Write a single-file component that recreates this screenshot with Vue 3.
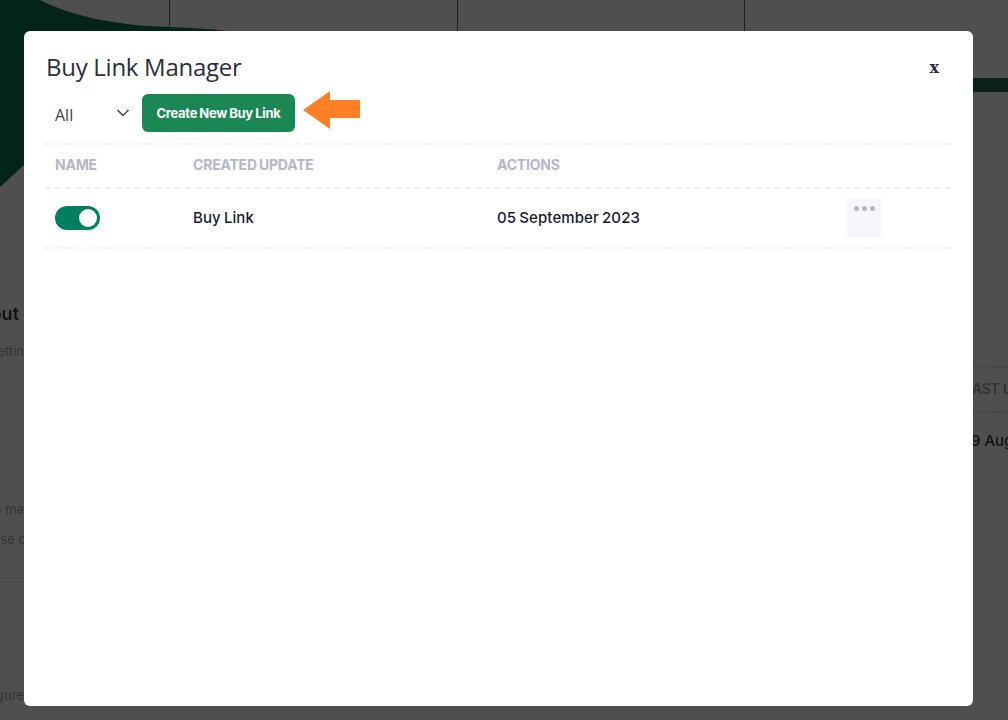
<script setup>
const row = { name: 'Buy Link', date: '05 September 2023' }
</script>

<template>
  <div class="page">
    <svg class="hero" width="300" height="200" viewBox="0 0 300 200" aria-hidden="true">
      <path d="M0 0H40C75 18 125 26 170 27C195 28 215 29 240 33L24 165L0 187Z" fill="#03241b" />
    </svg>
    <div class="top-cells">
      <div class="cell c1"></div>
      <div class="cell c2"></div>
      <div class="cell c3"></div>
    </div>
    <div class="side-bar"></div>

    <div class="under-left">
      <div class="ul-title">About</div>
      <div class="ul-sub">Settin</div>
      <div class="ul-line"></div>
      <div class="ul-t1">to ma</div>
      <div class="ul-t2">ase c</div>
      <div class="ul-line second"></div>
      <div class="ul-t3">Configure</div>
    </div>
    <div class="under-right">
      <div class="ur-line"></div>
      <div class="ur-head">AST U</div>
      <div class="ur-line"></div>
      <div class="ur-val">9 Aug</div>
      <div class="ur-line"></div>
    </div>

    <div class="modal">
      <header class="modal-head">
        <h1>Buy Link Manager</h1>
        <span class="close">x</span>
      </header>
      <div class="tools">
        <div class="select">
          <span>All</span>
          <svg width="14" height="8" viewBox="0 0 14 8"><path d="M1.5 1L7 6.5L12.5 1" fill="none" stroke="#444" stroke-width="1.5" /></svg>
        </div>
        <button class="create">Create New Buy Link</button>
        <svg class="arrow" width="58" height="38" viewBox="0 0 58 38"><path d="M1 19L28 0V9H58V27H28V38Z" fill="#ff7f27" /></svg>
      </div>
      <div class="grid head">
        <div>NAME</div>
        <div>CREATED UPDATE</div>
        <div>ACTIONS</div>
        <div></div>
      </div>
      <div class="grid body">
        <div><span class="toggle"><i></i></span></div>
        <div class="txt">{{ row.name }}</div>
        <div class="txt">{{ row.date }}</div>
        <div>
          <span class="more"><b></b><b></b><b></b></span>
        </div>
      </div>
    </div>
  </div>
</template>

<style>
html, body { margin: 0; background: #4f4f4f; }
</style>

<style scoped>
.page {
  position: relative;
  width: 1008px;
  height: 720px;
  overflow: hidden;
  background: #4f4f4f;
  font-family: Inter, "Liberation Sans", sans-serif;
}
.hero { position: absolute; left: 0; top: 0; }
.top-cells { position: absolute; top: 0; left: 169px; display: flex; height: 40px; }
.cell { border-left: 1px solid #10261f; }
.c1 { width: 287px; }
.c2 { width: 286px; }
.side-bar { position: absolute; right: 0; top: 78px; width: 40px; height: 14px; background: #0c1f1a; }
.under-left { position: absolute; left: 0; top: 300px; width: 24px; height: 420px; overflow: hidden; color: #2c2c2c; filter: blur(0.4px); }
.under-left > div { display: flex; justify-content: flex-end; white-space: nowrap; }
.ul-title { font-size: 18px; font-weight: 600; color: #111; margin-top: 3px; height: 24px; margin-right: 5px; }
.ul-sub { font-size: 13px; margin-top: 16px; height: 18px; color: #333; }
.ul-line { height: 1px; background: #484848; margin-top: 47px; }
.ul-line.second { margin-top: 32px; }
.ul-t1 { font-size: 13px; margin-top: 92px; height: 18px; color: #333; }
.ul-t2 { font-size: 13px; margin-top: 12px; height: 18px; color: #333; margin-right: -2px; }
.ul-t3 { font-size: 13px; margin-top: 105px; height: 18px; color: #333; }
.under-right { position: absolute; right: 0; top: 366px; width: 35px; overflow: hidden; filter: blur(0.4px); }
.under-right > div { white-space: nowrap; }
.ur-line { border-top: 2px dashed #474747; }
.ur-head { font-size: 14px; font-weight: 600; color: #333; padding: 12px 0 14px 0; margin-left: -1px; letter-spacing: -0.3px; }
.ur-val { font-size: 15px; font-weight: 500; color: #111; padding: 18px 0 21px 0; margin-left: -2px; }

.modal {
  position: absolute;
  left: 24px;
  top: 31px;
  width: 949px;
  height: 675px;
  box-sizing: border-box;
  padding: 0 22px 0 21px;
  background: #fff;
  border-radius: 6px;
}
.modal-head { display: flex; justify-content: space-between; align-items: center; height: 63px; padding-left: 1px; }
h1 {
  margin: 8px 0 0;
  font-family: "Open Sans", sans-serif;
  font-weight: 400;
  font-size: 24px;
  letter-spacing: -0.28px;
  color: #2a2f3a;
}
.close { font-family: "DejaVu Serif", serif; font-weight: 700; font-size: 16px; color: #2b2b3a; margin: 10px 12px 0 0; line-height: 1; }
.tools { display: flex; align-items: center; height: 38px; }
.select {
  width: 97px;
  box-sizing: border-box;
  padding: 4px 18px 0 10px;
  display: flex;
  justify-content: space-between;
  align-items: center;
  font-family: "Open Sans", sans-serif;
  font-size: 16px;
  color: #444;
}
.select svg { margin-top: -5px; margin-right: -6px; }
.create {
  width: 153px;
  height: 38px;
  border: 0;
  border-radius: 6px;
  background: #1a8754;
  color: #fff;
  font-family: Inter, sans-serif;
  font-size: 13px;
  font-weight: 700;
  letter-spacing: -0.3px;
  word-spacing: -0.5px;
  padding: 0;
  margin-right: 7px;
}
.arrow { margin-top: -6px; }
.grid {
  display: grid;
  grid-template-columns: 138px 304px 350px 1fr;
  align-items: center;
  padding-left: 10px;
  border-bottom: 2px dashed #eef0f2;
}
.head {
  margin-top: 11px;
  height: 46px;
  box-sizing: border-box;
  padding-bottom: 4px;
  border-top: 2px dashed #eef0f2;
  font-size: 14px;
  font-weight: 700;
  color: #b5b5c9;
  letter-spacing: -0.2px;
  word-spacing: -1px;
}
.body { height: 60px; box-sizing: border-box; font-size: 15px; font-weight: 500; color: #181c32; word-spacing: -1px; letter-spacing: 0.1px; }
.txt { padding-bottom: 2px; }
.toggle {
  display: flex;
  justify-content: flex-end;
  align-items: center;
  width: 45px;
  height: 24px;
  box-sizing: border-box;
  padding-right: 3px;
  border-radius: 12px;
  background: #008060;
}
.toggle i { width: 18px; height: 18px; border-radius: 50%; background: #fff; }
.more {
  display: flex;
  justify-content: center;
  gap: 3px;
  width: 34px;
  height: 40px;
  box-sizing: border-box;
  padding-top: 8px;
  background: #f5f6f9;
}
.more b { width: 5px; height: 5px; border-radius: 50%; background: #b5b5c9; }
</style>
